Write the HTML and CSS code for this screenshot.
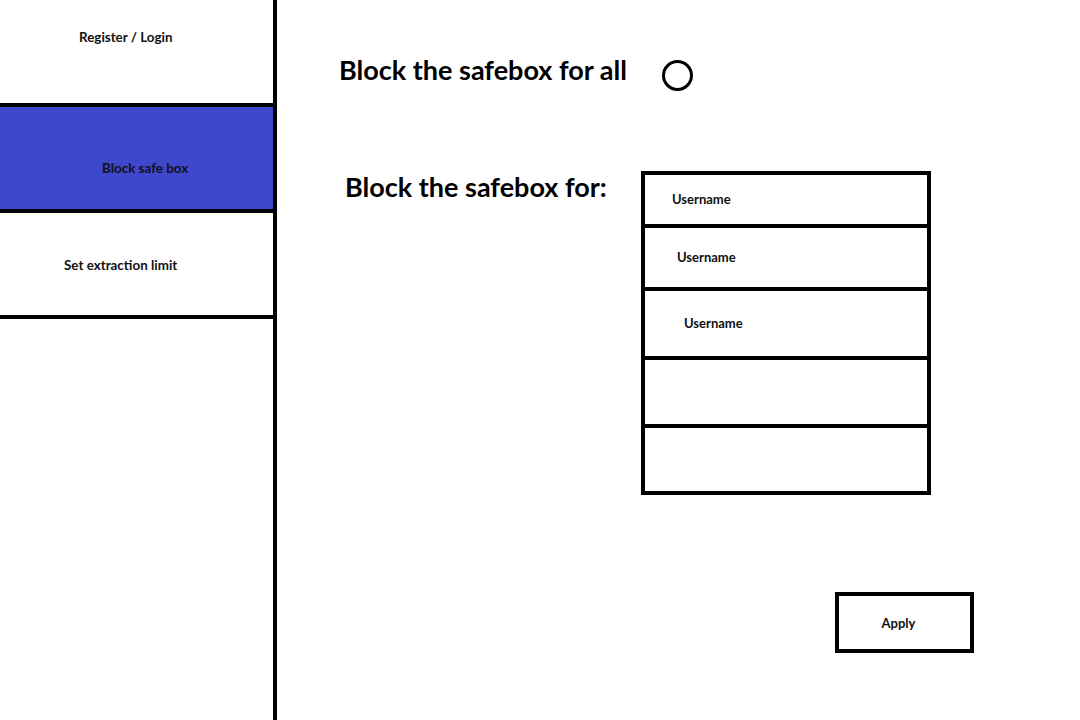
FILE: index.html
```html
<!DOCTYPE html>
<html lang="en">
<head>
  <meta charset="UTF-8">
  <meta name="viewport" content="width=device-width, initial-scale=1">
  <title>Block safe box</title>
  <link rel="stylesheet" href="styles.css">
</head>
<body>

  <div class="layout">
    <!-- Side menu -->
    <nav class="sidebar">
      <a class="nav-item nav-login" href="#">Register / Login</a>
      <a class="nav-item nav-block active" href="#">Block safe box</a>
      <a class="nav-item nav-limit" href="#">Set extraction limit</a>
    </nav>

    <main class="content">
      <div class="block-all">
        <h2 class="heading heading-all">Block the safebox for all</h2>
        <span class="radio"></span>
      </div>

      <div class="block-for">
        <h2 class="heading heading-for">Block the safebox for:</h2>
        <div class="user-list">
          <div class="user-row row-1">Username</div>
          <div class="user-row row-2">Username</div>
          <div class="user-row row-3">Username</div>
          <div class="user-row row-4"></div>
          <div class="user-row row-5"></div>
        </div>
      </div>

      <div class="actions">
        <button class="apply-btn" type="button">Apply</button>
      </div>
    </main>
  </div>

</body>
</html>
```

FILE: styles.css
```css
body {
  font-family: Lato, "Open Sans", sans-serif;
  background: #fff;
  color: #000;
  margin: 0;
  padding: 0;
}

.layout {
  display: flex;
  min-height: 720px;
}

/* Side menu */
.sidebar {
  width: 273px;
  border-right: 4px solid #000;
  display: flex;
  flex-direction: column;
  align-self: stretch;
}

.nav-item {
  display: block;
  box-sizing: border-box;
  height: 107px;
  border-bottom: 4px solid #000;
  color: #111;
  text-decoration: none;
  font-size: 13.4px;
  font-weight: 700;
  line-height: 16px;
}

.nav-login {
  height: 107px;
  padding: 29px 0 0 79px;
}

.nav-block {
  height: 106px;
  padding: 53px 0 0 102px;
}

.nav-limit {
  height: 106px;
  padding: 44px 0 0 64px;
}

.nav-item.active {
  background-color: #3f48cc;
}

/* Main area */
.content {
  flex: 1;
  padding: 52px 0 0 62px;
}

.heading {
  margin: 0;
  font-size: 27px;
  font-weight: 700;
  line-height: 30px;
}

.block-all {
  display: flex;
  align-items: flex-start;
  gap: 35px;
}

.heading-all {
  margin-top: 3px;
}

.radio {
  width: 25px;
  height: 25px;
  border: 3px solid #000;
  border-radius: 50%;
  margin-top: 8px;
}

.block-for {
  display: flex;
  align-items: flex-start;
  margin-top: 80px;
  padding-left: 6px;
}

.heading-for {
  width: 296px;
  margin-top: 1px;
}

.user-list {
  width: 282px;
  border: 4px solid #000;
}

.user-row {
  box-sizing: border-box;
  font-size: 13px;
  font-weight: 700;
  color: #111;
  border-bottom: 4px solid #000;
}

.user-row:last-child {
  border-bottom: none;
}

.row-1 { height: 53px; padding: 16px 0 0 27px; }
.row-2 { height: 63px; padding: 21px 0 0 32px; }
.row-3 { height: 69px; padding: 24px 0 0 39px; }
.row-4 { height: 68px; }
.row-5 { height: 63px; }

.actions {
  display: flex;
  justify-content: flex-end;
  padding-right: 106px;
  margin-top: 97px;
}

.apply-btn {
  width: 139px;
  height: 61px;
  padding: 0 12px 0 0;
  background: #fff;
  border: 4px solid #000;
  font-family: inherit;
  font-size: 13px;
  font-weight: 700;
  color: #111;
  cursor: pointer;
}
```
